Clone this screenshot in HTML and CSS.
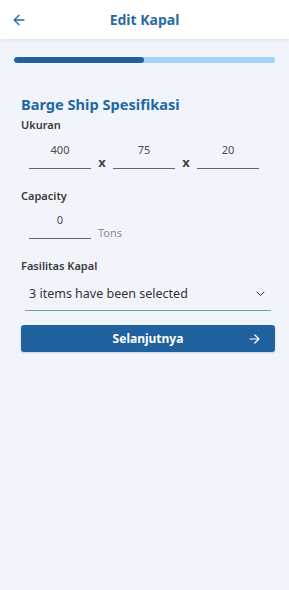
FILE: index.html
```html
<!DOCTYPE html>
<html>
<head>
<meta charset="utf-8">
<link rel="stylesheet" href="styles.css">
</head>
<body>
<header class="topbar">
  <span class="back">
    <svg width="12" height="12" viewBox="0 0 12 12"><path d="M11 6H1.5M6 1.2L1.2 6 6 10.8" fill="none" stroke="#2a6aa3" stroke-width="1.3" stroke-linecap="round" stroke-linejoin="round"/></svg>
  </span>
  <h1 class="title">Edit Kapal</h1>
  <span></span>
</header>
<main class="page">
  <div class="progress"><div class="progress-fill"></div></div>
  <section class="form">
    <h2 class="heading">Barge Ship Spesifikasi</h2>
    <div class="label">Ukuran</div>
    <div class="dims">
      <div class="field">400</div>
      <span class="times">x</span>
      <div class="field">75</div>
      <span class="times">x</span>
      <div class="field">20</div>
    </div>
    <div class="label label-cap">Capacity</div>
    <div class="cap-row">
      <div class="field">0</div>
      <span class="unit">Tons</span>
    </div>
    <div class="label label-fas">Fasilitas Kapal</div>
    <div class="select">
      <span>3 items have been selected</span>
      <svg width="9" height="6" viewBox="0 0 9 6"><path d="M1 1l3.5 3.5L8 1" fill="none" stroke="#333" stroke-width="1" stroke-linecap="round" stroke-linejoin="round"/></svg>
    </div>
    <button class="next">
      <span>Selanjutnya</span>
      <svg class="next-arrow" width="11" height="10" viewBox="0 0 11 10"><path d="M1 5h9M5.8 1L10 5 5.8 9" fill="none" stroke="#fff" stroke-width="1.2" stroke-linecap="round" stroke-linejoin="round"/></svg>
    </button>
  </section>
</main>
</body>
</html>
```
FILE: styles.css
```css
* { box-sizing: border-box; }
html, body { margin: 0; padding: 0; }
body {
  background: #f1f5fb;
  font-family: "Noto Sans", "Open Sans", sans-serif;
  color: #333;
  width: 289px;
  height: 590px;
}
.topbar {
  height: 39px;
  background: #fff;
  display: grid;
  grid-template-columns: 40px 1fr 40px;
  align-items: center;
  box-shadow: 0 1px 4px rgba(0,0,0,0.08);
}
.back { padding-left: 13px; display: flex; align-items: center; }
.title {
  margin: 0;
  text-align: center;
  font-size: 14px;
  font-weight: 700;
  color: #2a6aa3;
}
.page { padding: 18px 14px 0 14px; }
.progress {
  height: 6px;
  border-radius: 3px;
  background: #a3d1f7;
  overflow: hidden;
}
.progress-fill { width: 130px; height: 100%; background: #21629c; border-radius: 3px; }
.form { padding: 31px 0 0 7px; }
.heading {
  margin: 0;
  font-size: 14.6px;
  line-height: 20px;
  font-weight: 700;
  color: #2467a0;
}
.label {
  font-size: 11px;
  line-height: 15px;
  font-weight: 600;
  color: #3a3a3a;
  margin-top: 3px;
}
.dims { display: flex; align-items: flex-end; padding-left: 8px; margin-top: 10px; }
.field {
  width: 62px;
  text-align: center;
  font-size: 11px;
  line-height: 15px;
  color: #4a4a4a;
  padding-bottom: 11px;
  border-bottom: 1.5px solid #5f6670;
}
.times {
  width: 22px;
  text-align: center;
  font-size: 13px;
  font-weight: 700;
  color: #444;
  line-height: 14px;
}
.label-cap { margin-top: 19px; }
.cap-row { display: flex; align-items: flex-end; padding-left: 8px; margin-top: 9px; }
.unit { font-size: 11px; color: #8a8f96; margin-left: 7px; line-height: 15px; margin-bottom: -1px; }
.label-fas { margin-top: 19px; }
.select {
  margin: 4px 4px 0 4px;
  height: 34px;
  display: flex;
  align-items: center;
  justify-content: space-between;
  padding: 0 6px 0 4px;
  border-bottom: 1px solid #6aa59a;
  font-size: 12.5px;
  color: #333;
}
.next {
  margin-top: 14px;
  width: 254px;
  height: 27px;
  border: none;
  border-radius: 3px;
  background: #2062a0;
  color: #fff;
  font-family: inherit;
  font-size: 12px;
  font-weight: 700;
  display: flex;
  align-items: center;
  justify-content: center;
  position: relative;
  box-shadow: 0 1px 2px rgba(0,0,0,0.15);
}
.next-arrow { position: absolute; right: 15px; top: 9px; }
```
